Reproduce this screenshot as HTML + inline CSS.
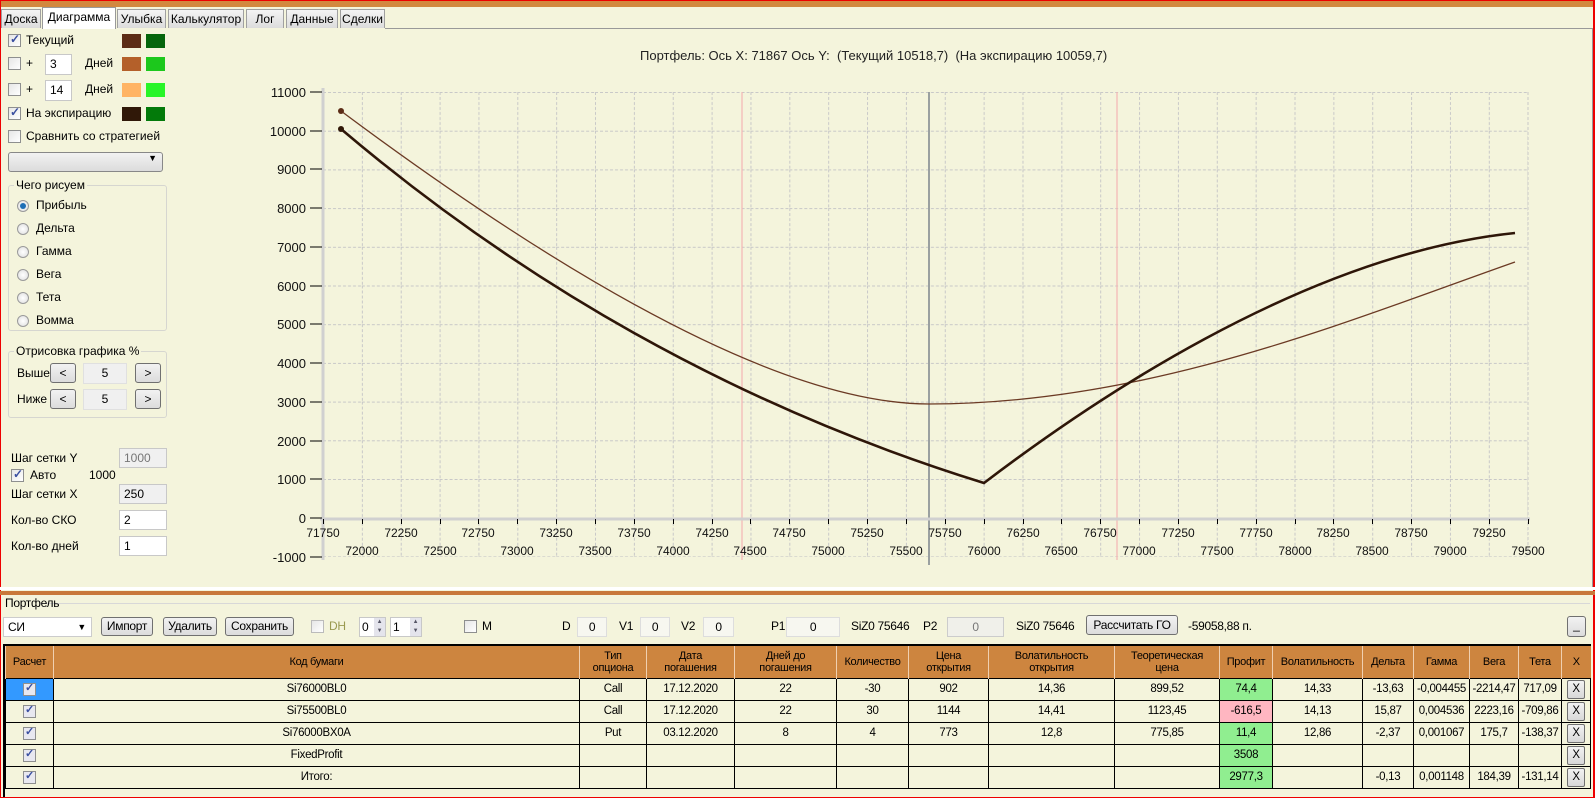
<!DOCTYPE html>
<html><head><meta charset="utf-8">
<style>
*{box-sizing:border-box;margin:0;padding:0}
body{width:1595px;height:798px;overflow:hidden;background:#f4f4dc;font-family:"Liberation Sans",sans-serif;font-size:12px;color:#000;position:relative}
.a{position:absolute;white-space:nowrap}
.tab{position:absolute;top:9px;height:19px;border:1px solid #a0a0a0;border-bottom:none;background:linear-gradient(#f4f4f4,#dcdcdc);font-size:12px;text-align:center;line-height:18px}
.cb{position:absolute;width:13px;height:13px;border:1px solid #8e8f8f;background:linear-gradient(135deg,#e6e6e6,#fff)}
.cb.on::after{content:"✓";position:absolute;left:1px;top:-3px;font-size:12px;color:#3a4fa0;font-weight:bold}
.tb{position:absolute;height:21px;border:1px solid #c8c8c8;background:#fff;padding-left:4px;line-height:19px}
.tb.g{background:#f0f0f0;color:#777}
.btn{position:absolute;border:1px solid #707070;border-radius:3px;background:linear-gradient(#f2f2f2,#dcdcdc);text-align:center}
.rad{position:absolute;width:12px;height:12px;border-radius:50%;border:1px solid #9a9a9a;background:radial-gradient(#fff,#ddd)}
.rad.on::after{content:"";position:absolute;left:2px;top:2px;width:6px;height:6px;border-radius:50%;background:#1f6fb6}
.grp{position:absolute;border:1px solid #d6d6d0;border-radius:3px}
.sw{position:absolute;width:19px;height:14px}
.n{font-family:"Liberation Sans Narrow","Liberation Sans",sans-serif;letter-spacing:-0.3px}
table{border-collapse:collapse;font-family:"Liberation Sans Narrow","Liberation Sans",sans-serif;font-size:11.5px;letter-spacing:-0.3px}
td{border:1px solid #000;text-align:center;height:22px;padding:0;overflow:hidden;white-space:nowrap}
th{background:#cd853f;font-weight:normal;border-left:1px solid #f0d0b0;height:32px;line-height:12px;font-size:11px}
.gr{background:#90ee90}.pk{background:#ffb6c1}
.xb{display:inline-block;width:18px;height:19px;border:1px solid #707070;border-radius:2px;background:linear-gradient(#f2f2f2,#d8d8d8);line-height:17px;margin-top:1px}
.ck{display:inline-block;width:13px;height:13px;border:1px solid #8e8f8f;background:#e8e8f0;position:relative;vertical-align:middle}
.ck::after{content:"✓";position:absolute;left:1px;top:-3px;font-size:11px;color:#3a4fa0;font-weight:bold}
</style></head><body>
<div class="a" style="left:0;top:0;width:1595px;height:7px;background:#d2883f"></div>
<div class="a" style="left:0;top:0;width:1px;height:798px;background:#e00"></div>
<div class="a" style="right:0;top:0;width:2px;height:798px;background:#e00"></div>
<div class="a" style="left:0;top:0;width:1595px;height:1px;background:#e00"></div>
<div class="a" style="left:0;bottom:0;width:1595px;height:1px;background:#e00"></div>
<div class="a" style="left:385px;top:28px;width:1208px;height:1px;background:#999"></div>
<div class="a" style="left:1592px;top:28px;width:1px;height:560px;background:#999"></div>
<div class="tab" style="left:1px;width:40px">Доска</div>
<div class="tab" style="left:42px;width:74px;top:7px;height:22px;background:#fff;border-color:#999">Диаграмма</div>
<div class="tab" style="left:117px;width:49px">Улыбка</div>
<div class="tab" style="left:168px;width:76px">Калькулятор</div>
<div class="tab" style="left:246px;width:38px">Лог</div>
<div class="tab" style="left:286px;width:52px">Данные</div>
<div class="tab" style="left:340px;width:45px">Сделки</div>

<div class="cb on" style="left:8px;top:34px"></div><div class="a" style="left:26px;top:33px">Текущий</div>
<div class="sw" style="left:122px;top:34px;background:#5c2c16"></div><div class="sw" style="left:146px;top:34px;background:#05650c"></div>
<div class="cb" style="left:8px;top:57px"></div><div class="a" style="left:26px;top:56px">+</div>
<div class="tb" style="left:45px;top:54px;width:27px">3</div><div class="a" style="left:85px;top:56px">Дней</div>
<div class="sw" style="left:122px;top:57px;background:#b4602a"></div><div class="sw" style="left:146px;top:57px;background:#1cc81c"></div>
<div class="cb" style="left:8px;top:83px"></div><div class="a" style="left:26px;top:82px">+</div>
<div class="tb" style="left:45px;top:80px;width:27px">14</div><div class="a" style="left:85px;top:82px">Дней</div>
<div class="sw" style="left:122px;top:83px;background:#ffb464"></div><div class="sw" style="left:146px;top:83px;background:#28f528"></div>
<div class="cb on" style="left:8px;top:107px"></div><div class="a" style="left:26px;top:106px">На экспирацию</div>
<div class="sw" style="left:122px;top:107px;background:#301808"></div><div class="sw" style="left:146px;top:107px;background:#037a0a"></div>
<div class="cb" style="left:8px;top:130px"></div><div class="a" style="left:26px;top:129px">Сравнить со стратегией</div>
<div class="btn" style="left:8px;top:152px;width:155px;height:20px;border-color:#888"><span style="position:absolute;right:5px;top:0;font-size:9px">▼</span></div>

<div class="grp" style="left:8px;top:185px;width:159px;height:146px"></div>
<div class="a" style="left:14px;top:178px;background:#f4f4dc;padding:0 2px">Чего рисуем</div>
<div class="rad on" style="left:17px;top:200px"></div><div class="a" style="left:36px;top:198px">Прибыль</div>
<div class="rad" style="left:17px;top:223px"></div><div class="a" style="left:36px;top:221px">Дельта</div>
<div class="rad" style="left:17px;top:246px"></div><div class="a" style="left:36px;top:244px">Гамма</div>
<div class="rad" style="left:17px;top:269px"></div><div class="a" style="left:36px;top:267px">Вега</div>
<div class="rad" style="left:17px;top:292px"></div><div class="a" style="left:36px;top:290px">Тета</div>
<div class="rad" style="left:17px;top:315px"></div><div class="a" style="left:36px;top:313px">Вомма</div>

<div class="grp" style="left:8px;top:351px;width:159px;height:67px"></div>
<div class="a" style="left:14px;top:344px;background:#f4f4dc;padding:0 2px">Отрисовка графика %</div>
<div class="a" style="left:17px;top:366px">Выше</div>
<div class="btn" style="left:50px;top:363px;width:26px;height:20px;line-height:18px">&lt;</div>
<div class="tb g" style="left:83px;top:363px;width:44px;text-align:center;padding:0;color:#000;border-color:#e0e0e0">5</div>
<div class="btn" style="left:135px;top:363px;width:26px;height:20px;line-height:18px">&gt;</div>
<div class="a" style="left:17px;top:392px">Ниже</div>
<div class="btn" style="left:50px;top:389px;width:26px;height:20px;line-height:18px">&lt;</div>
<div class="tb g" style="left:83px;top:389px;width:44px;text-align:center;padding:0;color:#000;border-color:#e0e0e0">5</div>
<div class="btn" style="left:135px;top:389px;width:26px;height:20px;line-height:18px">&gt;</div>

<div class="a" style="left:11px;top:451px">Шаг сетки Y</div>
<div class="tb g" style="left:119px;top:448px;width:48px;height:20px;line-height:18px">1000</div>
<div class="cb on" style="left:11px;top:469px"></div><div class="a" style="left:30px;top:468px">Авто</div><div class="a" style="left:89px;top:468px">1000</div>
<div class="a" style="left:11px;top:487px">Шаг сетки X</div>
<div class="tb g" style="left:119px;top:484px;width:48px;height:20px;line-height:18px;color:#000">250</div>
<div class="a" style="left:11px;top:513px">Кол-во СКО</div>
<div class="tb" style="left:119px;top:510px;width:48px;height:20px;line-height:18px">2</div>
<div class="a" style="left:11px;top:539px">Кол-во дней</div>
<div class="tb" style="left:119px;top:536px;width:48px;height:20px;line-height:18px">1</div>

<div class="a" style="left:640px;top:48px;font-size:13px;color:#222">Портфель: Ось X: 71867 Ось Y:&nbsp; (Текущий 10518,7)&nbsp; (На экспирацию 10059,7)</div>
<svg class="a" style="left:0;top:0" width="1595" height="590" font-family="Liberation Sans, sans-serif" font-size="12">
<defs><pattern id="gp" x="323" y="92" width="38.86" height="38.7" patternUnits="userSpaceOnUse">
<path d="M0 0.5H38.86M0.5 0V38.7" stroke="#c8c8c8" stroke-width="1" stroke-dasharray="3,2" fill="none"/></pattern></defs>
<rect x="323" y="92" width="1205" height="465" fill="url(#gp)"/>
<path d="M1528 92V557" stroke="#c8c8c8" stroke-dasharray="3,2"/>
<path d="M742 92V560M1117 92V560" stroke="#f4b4b4" stroke-width="1.2"/>
<path d="M929 92V565" stroke="#9aa0a0" stroke-width="2"/>
<path d="M323 88V560" stroke="#d0d0d0" stroke-width="3"/>
<path d="M320 519H1530" stroke="#d0d0d0" stroke-width="3"/>
<g stroke="#000" stroke-width="1">
<path d="M310 92H322M310 131H322M310 169H322M310 208H322M310 247H322M310 286H322M310 324H322M310 363H322M310 402H322M310 441H322M310 479H322M310 518H322M310 557H322"/>
<path d="M323.5 519v5M362.5 519v5M401.5 519v5M440.5 519v5M478.5 519v5M517.5 519v5M556.5 519v5M595.5 519v5M634.5 519v5M673.5 519v5M712.5 519v5M750.5 519v5M789.5 519v5M828.5 519v5M867.5 519v5M906.5 519v5M945.5 519v5M984.5 519v5M1023.5 519v5M1061.5 519v5M1100.5 519v5M1139.5 519v5M1178.5 519v5M1217.5 519v5M1256.5 519v5M1295.5 519v5M1333.5 519v5M1372.5 519v5M1411.5 519v5M1450.5 519v5M1489.5 519v5M1528.5 519v5"/>
</g>
<g text-anchor="end" font-size="13" fill="#111">
<text x="306" y="97">11000</text><text x="306" y="136">10000</text><text x="306" y="174">9000</text><text x="306" y="213">8000</text><text x="306" y="252">7000</text><text x="306" y="291">6000</text><text x="306" y="329">5000</text><text x="306" y="368">4000</text><text x="306" y="407">3000</text><text x="306" y="446">2000</text><text x="306" y="484">1000</text><text x="306" y="523">0</text><text x="306" y="562">-1000</text>
</g>
<g text-anchor="middle" fill="#111">
<text x="323" y="537">71750</text><text x="401" y="537">72250</text><text x="478" y="537">72750</text><text x="556" y="537">73250</text><text x="634" y="537">73750</text><text x="712" y="537">74250</text><text x="789" y="537">74750</text><text x="867" y="537">75250</text><text x="945" y="537">75750</text><text x="1023" y="537">76250</text><text x="1100" y="537">76750</text><text x="1178" y="537">77250</text><text x="1256" y="537">77750</text><text x="1333" y="537">78250</text><text x="1411" y="537">78750</text><text x="1489" y="537">79250</text>
<text x="362" y="555">72000</text><text x="440" y="555">72500</text><text x="517" y="555">73000</text><text x="595" y="555">73500</text><text x="673" y="555">74000</text><text x="750" y="555">74500</text><text x="828" y="555">75000</text><text x="906" y="555">75500</text><text x="984" y="555">76000</text><text x="1061" y="555">76500</text><text x="1139" y="555">77000</text><text x="1217" y="555">77500</text><text x="1295" y="555">78000</text><text x="1372" y="555">78500</text><text x="1450" y="555">79000</text><text x="1528" y="555">79500</text>
</g>
<path d="M341 111Q734 404 929 404C1150 404 1350 320 1515 262" stroke="#6b3a24" stroke-width="1.3" fill="none"/>
<path d="M341 129Q629 373 984 483C1080 410 1300 255 1515 233" stroke="#2e1608" stroke-width="2.6" fill="none"/>
<circle cx="341" cy="111" r="3" fill="#5c2c16"/><circle cx="341" cy="129" r="3" fill="#301808"/>
</svg>

<div class="a" style="left:0;top:587px;width:1595px;height:3px;background:#fff"></div>
<div class="a" style="left:0;top:591px;width:1595px;height:4px;background:#c8783a"></div>
<div class="a" style="left:40px;top:603px;width:1550px;height:1px;background:#d8d8d8"></div>
<div class="a n" style="left:5px;top:596px">Портфель</div>
<div class="tb n" style="left:3px;top:617px;width:89px;height:20px;line-height:18px;border-color:#ccc">СИ<span style="position:absolute;right:5px;font-size:9px">▼</span></div>
<div class="btn n" style="left:101px;top:617px;width:52px;height:19px;line-height:17px">Импорт</div>
<div class="btn n" style="left:163px;top:617px;width:54px;height:19px;line-height:17px">Удалить</div>
<div class="btn n" style="left:225px;top:617px;width:69px;height:19px;line-height:17px">Сохранить</div>
<div class="cb" style="left:311px;top:620px;border-color:#bbb"></div><div class="a n" style="left:329px;top:619px;color:#9a9a50">DH</div>
<div class="tb n" style="left:359px;top:617px;width:27px;height:20px;line-height:18px;padding-left:2px">0<span style="position:absolute;right:0;top:0;width:11px;height:18px;background:#e4e4ec;font-size:6px;line-height:9px;text-align:center;color:#556">▲<br>▼</span></div>
<div class="tb n" style="left:390px;top:617px;width:32px;height:20px;line-height:18px;padding-left:2px">1<span style="position:absolute;right:0;top:0;width:11px;height:18px;background:#e4e4ec;font-size:6px;line-height:9px;text-align:center;color:#556">▲<br>▼</span></div>
<div class="cb" style="left:464px;top:620px"></div><div class="a n" style="left:482px;top:619px">M</div>
<div class="a n" style="left:562px;top:619px">D</div><div class="tb n" style="left:577px;top:617px;width:30px;height:20px;line-height:18px;text-align:center;padding:0;border-color:#ddd;background:#f7f7f0">0</div>
<div class="a n" style="left:619px;top:619px">V1</div><div class="tb n" style="left:640px;top:617px;width:30px;height:20px;line-height:18px;text-align:center;padding:0;border-color:#ddd;background:#f7f7f0">0</div>
<div class="a n" style="left:681px;top:619px">V2</div><div class="tb n" style="left:703px;top:617px;width:31px;height:20px;line-height:18px;text-align:center;padding:0;border-color:#ddd;background:#f7f7f0">0</div>
<div class="a n" style="left:771px;top:619px">P1</div><div class="tb n" style="left:786px;top:617px;width:54px;height:20px;line-height:18px;text-align:center;padding:0;border-color:#ddd;background:#f7f7f0">0</div>
<div class="a n" style="left:851px;top:619px">SiZ0 75646</div>
<div class="a n" style="left:923px;top:619px">P2</div><div class="tb n" style="left:947px;top:617px;width:57px;height:20px;line-height:18px;text-align:center;padding:0;border-color:#ccc;background:#f0f0ea;color:#777">0</div>
<div class="a n" style="left:1016px;top:619px">SiZ0 75646</div>
<div class="btn n" style="left:1086px;top:615px;width:92px;height:20px;line-height:18px">Рассчитать ГО</div>
<div class="a n" style="left:1188px;top:619px">-59058,88 п.</div>
<div class="btn" style="left:1567px;top:616px;width:19px;height:21px;line-height:16px">_</div>

<div class="a" style="left:3px;top:644px;width:1588px;height:153px;border:2px solid #000;border-bottom:none;border-right:none"></div>
<table class="a" style="left:5px;top:646px;width:1585px;table-layout:fixed">
<colgroup><col style="width:48px"><col style="width:526px"><col style="width:67px"><col style="width:88px"><col style="width:102px"><col style="width:72px"><col style="width:80px"><col style="width:126px"><col style="width:105px"><col style="width:53px"><col style="width:90px"><col style="width:51px"><col style="width:56px"><col style="width:49px"><col style="width:43px"><col style="width:29px"></colgroup>
<tr><th>Расчет</th><th>Код бумаги</th><th>Тип<br>опциона</th><th>Дата<br>погашения</th><th>Дней до<br>погашения</th><th>Количество</th><th>Цена<br>открытия</th><th>Волатильность<br>открытия</th><th>Теоретическая<br>цена</th><th>Профит</th><th>Волатильность</th><th>Дельта</th><th>Гамма</th><th>Вега</th><th>Тета</th><th>X</th></tr>
<tr><td style="background:#3399ff"><span class="ck"></span></td><td>Si76000BL0</td><td>Call</td><td>17.12.2020</td><td>22</td><td>-30</td><td>902</td><td>14,36</td><td>899,52</td><td class="gr">74,4</td><td>14,33</td><td>-13,63</td><td>-0,004455</td><td>-2214,47</td><td>717,09</td><td><span class="xb">X</span></td></tr>
<tr><td><span class="ck"></span></td><td>Si75500BL0</td><td>Call</td><td>17.12.2020</td><td>22</td><td>30</td><td>1144</td><td>14,41</td><td>1123,45</td><td class="pk">-616,5</td><td>14,13</td><td>15,87</td><td>0,004536</td><td>2223,16</td><td>-709,86</td><td><span class="xb">X</span></td></tr>
<tr><td><span class="ck"></span></td><td>Si76000BX0A</td><td>Put</td><td>03.12.2020</td><td>8</td><td>4</td><td>773</td><td>12,8</td><td>775,85</td><td class="gr">11,4</td><td>12,86</td><td>-2,37</td><td>0,001067</td><td>175,7</td><td>-138,37</td><td><span class="xb">X</span></td></tr>
<tr><td><span class="ck"></span></td><td>FixedProfit</td><td></td><td></td><td></td><td></td><td></td><td></td><td></td><td class="gr">3508</td><td></td><td></td><td></td><td></td><td></td><td><span class="xb">X</span></td></tr>
<tr><td><span class="ck"></span></td><td>Итого:</td><td></td><td></td><td></td><td></td><td></td><td></td><td></td><td class="gr">2977,3</td><td></td><td>-0,13</td><td>0,001148</td><td>184,39</td><td>-131,14</td><td><span class="xb">X</span></td></tr>
</table>
</body></html>
